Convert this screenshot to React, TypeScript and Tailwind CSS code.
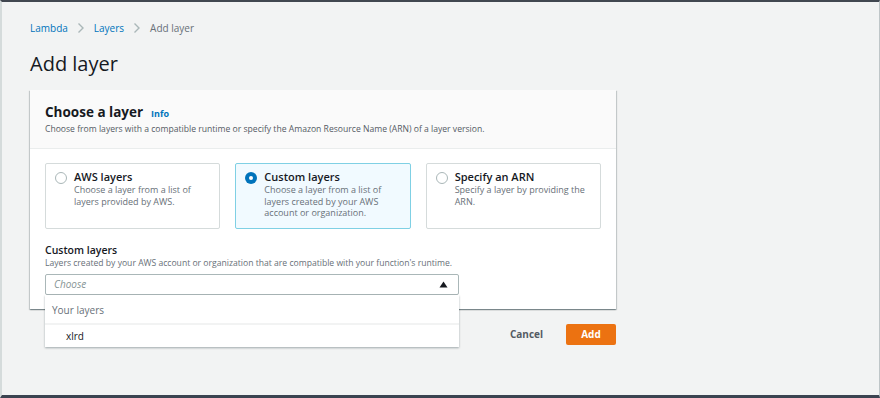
import React from "react";

const font = { fontFamily: '"Open Sans", "Noto Sans", sans-serif' };

function Radio({ checked }: { checked?: boolean }) {
  return checked ? (
    <span className="mt-[3px] flex h-[12px] w-[12px] shrink-0 items-center justify-center rounded-full bg-[#0073bb]">
      <span className="h-[4px] w-[4px] rounded-full bg-white" />
    </span>
  ) : (
    <span className="mt-[3px] h-[12px] w-[12px] shrink-0 rounded-full border border-[#aab7b8] bg-white" />
  );
}

function Card({ title, desc, checked }: { title: string; desc: string; checked?: boolean }) {
  return (
    <div
      className={
        "flex h-[66px] w-[176px] gap-[7px] rounded-[2px] border px-[9px] pt-[5px] " +
        (checked ? "border-[#7fd0e4] bg-[#f1faff]" : "border-[#d5dbdb] bg-white")
      }
    >
      <Radio checked={checked} />
      <div className="flex flex-col">
        <div className="text-[11px] leading-[15px] font-semibold text-[#16191f]">{title}</div>
        <div className="text-[9px] leading-[11.5px] text-[#687078]">{desc}</div>
      </div>
    </div>
  );
}

function Chevron() {
  return (
    <svg width="8" height="12" viewBox="0 0 8 12">
      <path d="M1.5 1.5 L6 6 L1.5 10.5" fill="none" stroke="#aab7b8" strokeWidth="1.4" />
    </svg>
  );
}

export default function App() {
  return (
    <div
      className="relative h-[398px] w-[880px] overflow-hidden border-t-[2px] border-b-[3px] border-l-[2px] border-r border-t-[#414750] border-b-[#3b4350] border-l-[#d5dbdb] border-r-[#bfc6c8] bg-[#f2f3f3]"
      style={font}
    >
      <div className="pl-[28px] pt-[18px]">
        <div className="flex items-center gap-[9px] text-[10px] leading-[16px]">
          <span className="text-[#0073bb]">Lambda</span>
          <Chevron />
          <span className="text-[#0073bb]">Layers</span>
          <Chevron />
          <span className="text-[#687078]">Add layer</span>
        </div>
        <div className="mt-[15px] text-[20px] leading-[26px] text-[#16191f]">Add layer</div>

        <div className="relative mt-[13px] w-[586px] bg-white shadow-[0_1px_1px_rgba(0,28,36,0.3),1px_1px_1px_rgba(0,28,36,0.15),-1px_1px_1px_rgba(0,28,36,0.15)]">
          <div className="border-b border-[#eaeded] bg-[#fafafa] px-[15px] pt-[13px] pb-[13px]">
            <div className="flex items-baseline gap-[8px]">
              <span className="text-[13.5px] leading-[18px] font-bold text-[#16191f]">Choose a layer</span>
              <span className="text-[9px] font-bold text-[#0073bb]">Info</span>
            </div>
            <div className="mt-[2px] text-[8.6px] leading-[12px] text-[#545b64]">
              Choose from layers with a compatible runtime or specify the Amazon Resource Name (ARN) of a layer version.
            </div>
          </div>
          <div className="px-[15px] pt-[14px] pb-[14px]">
            <div className="flex gap-[15px]">
              <Card title="AWS layers" desc="Choose a layer from a list of layers provided by AWS." />
              <Card checked title="Custom layers" desc="Choose a layer from a list of layers created by your AWS account or organization." />
              <Card title="Specify an ARN" desc="Specify a layer by providing the ARN." />
            </div>
            <div className="mt-[14px] text-[10.5px] leading-[14px] font-semibold text-[#16191f]">Custom layers</div>
            <div className="text-[8.6px] leading-[12px] text-[#687078]">
              Layers created by your AWS account or organization that are compatible with your function's runtime.
            </div>
            <div className="relative mt-[5px] w-[414px]">
              <div className="flex h-[21px] items-center justify-between rounded-[2px] border border-[#aab7b8] bg-white pl-[8px] pr-[10px]">
                <span className="text-[10px] italic text-[#879596]">Choose</span>
                <svg width="9" height="7" viewBox="0 0 9 7">
                  <path d="M0.5 6.5 L4.5 0.5 L8.5 6.5 Z" fill="#16191f" />
                </svg>
              </div>
              <div className="absolute left-0 top-[21px] z-10 w-[414px] bg-white shadow-[0_1px_2px_rgba(0,28,36,0.35)]">
                <div className="flex h-[30px] items-center border-b-[2px] border-[#f2f3f3] pl-[7px] pt-[2px] text-[10px] text-[#687078]">
                  Your layers
                </div>
                <div className="flex h-[22px] items-center pl-[21px] text-[10px] text-[#16191f]">xlrd</div>
              </div>
            </div>
          </div>
        </div>

        <div className="mt-[15px] flex w-[586px] items-center justify-end gap-[23px]">
          <span className="text-[10px] font-bold text-[#545b64]">Cancel</span>
          <div className="flex h-[21px] w-[50px] items-center justify-center rounded-[2px] bg-[#ec7211] text-[10px] font-bold text-white">
            Add
          </div>
        </div>
      </div>
    </div>
  );
}
